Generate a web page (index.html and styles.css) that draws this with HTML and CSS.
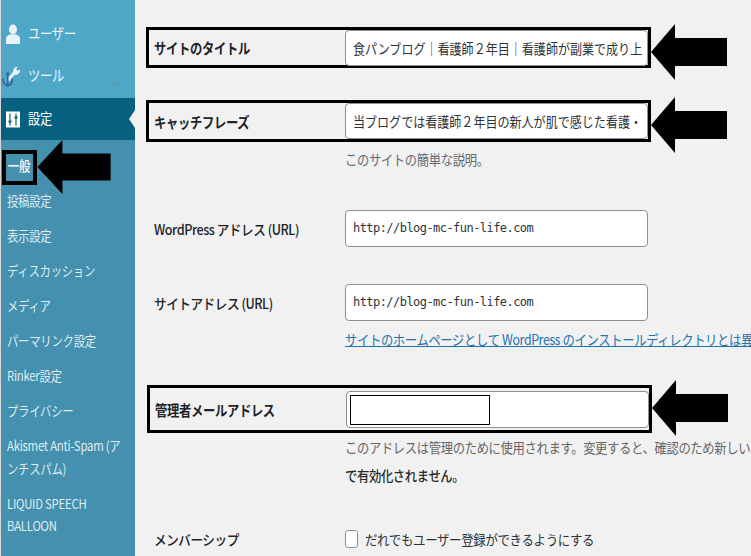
FILE: index.html
```html
<!DOCTYPE html>
<html lang="ja">
<head>
<meta charset="utf-8">
<title>一般設定</title>
<link rel="stylesheet" href="styles.css">
</head>
<body>
<div class="page">
  <nav class="sidebar">
    <div class="top-item">
      <svg class="menu-icon" viewBox="0 0 14 20"><ellipse cx="7" cy="5.500" rx="4" ry="5" fill="#e6f4fa"/><path d="M0 20v-5c0-3 3-4.500 4-4.500h6c1 0 4 1.500 4 4.500v5z" fill="#e6f4fa"/></svg>
      <span class="top-label">ユーザー</span>
    </div>
    <div class="top-item tools">
      <svg class="tool-icon" viewBox="0 0 20 22"><path d="M6 15 13.500 6.500" stroke="#e6f4fa" stroke-width="3.500" fill="none"/><path d="M12 7c-1-3 1-6 4.500-6.500L15 3l1 2 3-1.500c.5 3.500-2.500 6.500-6 5.500z" fill="#e6f4fa"/><path d="M6 8v13M1 13c0 4 2.500 7 5 8 2.500-1 5-4 5-8" fill="none" stroke="#35629c" stroke-width="1.800"/><circle cx="6" cy="8" r="1.600" fill="#35629c"/></svg>
      <span class="top-label">ツール</span>
      <svg class="return-mark" viewBox="0 0 10 8"><path d="M8.500 1v3.500H1.500M3.500 2.500l-2 2 2 2" fill="none" stroke="#6d8f9e" stroke-width="1"/></svg>
    </div>
    <div class="top-item active">
      <svg class="menu-icon" viewBox="0 0 14 16"><path fill="#fff" d="M0 0h14v16H0z"/><path d="M4 2v12M10 2v12" stroke="#0b5f7e" stroke-width="1.200"/><path d="M2.500 9h3v2h-3zM8.500 5h3v2h-3z" fill="#0b5f7e"/></svg>
      <span class="top-label">設定</span>
    </div>
    <ul class="submenu">
      <li class="current">一般</li>
      <li>投稿設定</li>
      <li>表示設定</li>
      <li>ディスカッション</li>
      <li>メディア</li>
      <li>パーマリンク設定</li>
      <li>Rinker設定</li>
      <li>プライバシー</li>
      <li>Akismet Anti-Spam (アンチスパム)</li>
      <li>LIQUID SPEECH BALLOON</li>
    </ul>
    <div class="current-frame"></div>
    <svg class="arrow sub-arrow" viewBox="0 0 76 56"><path d="M0 28 26 0v14h50v28H26v14z"/></svg>
  </nav>
  <main class="content">
    <div class="row framed first">
      <label>サイトのタイトル</label>
      <div class="field"><span class="squeeze">食パンブログ｜看護師２年目｜看護師が副業で成り上</span></div>
      <svg class="arrow row-arrow" viewBox="0 0 76 56"><path d="M0 28 24 0v14h52v28H24v14z"/></svg>
    </div>
    <div class="row framed second">
      <label>キャッチフレーズ</label>
      <div class="field"><span class="squeeze">当ブログでは看護師２年目の新人が肌で感じた看護・</span></div>
      <svg class="arrow row-arrow" viewBox="0 0 76 56"><path d="M0 28 24 0v14h52v28H24v14z"/></svg>
    </div>
    <p class="note tagline">このサイトの簡単な説明。</p>
    <div class="row plain wp">
      <label class="light">WordPress アドレス (URL)</label>
      <div class="field mono">http://blog-mc-fun-life.com</div>
    </div>
    <div class="row plain site">
      <label class="light">サイトアドレス (URL)</label>
      <div class="field mono">http://blog-mc-fun-life.com</div>
    </div>
    <p class="note link-note"><a href="#">サイトのホームページとして WordPress のインストールディレクトリとは異なる場所を設定する</a></p>
    <div class="row framed mail">
      <label>管理者メールアドレス</label>
      <div class="field tall"><span class="redact"></span></div>
      <svg class="arrow row-arrow mail-arrow" viewBox="0 0 76 56"><path d="M0 28 24 0v14h52v28H24v14z"/></svg>
    </div>
    <p class="note mail-note">このアドレスは管理のために使用されます。変更すると、確認のため新しいアドレスにメールを送信します。<br><b>で有効化されません。</b></p>
    <div class="member">
      <label class="light">メンバーシップ</label>
      <span class="checkbox"></span>
      <span class="check-text">だれでもユーザー登録ができるようにする</span>
    </div>
  </main>
</div>
</body>
</html>
```
FILE: styles.css
```css
* { box-sizing: border-box; }
html, body { margin: 0; height: 100%; }
body {
  background: #f1f1f1;
  font-family: "Noto Sans CJK JP", "Noto Sans", sans-serif;
  overflow: hidden;
}
.page {
  display: grid;
  grid-template-columns: 135px 1fr;
  width: 751px;
  height: 556px;
  overflow: hidden;
}
.sidebar {
  position: relative;
  background: #4fa7c8;
  border-left: 1px solid #d8d8d8;
  color: #eaf6fb;
  padding-top: 13px;
  height: 556px;
  overflow: hidden;
}
.top-item {
  display: flex;
  align-items: center;
  gap: 8px;
  height: 42px;
  padding-left: 5px;
  font-size: 15px;
  letter-spacing: -.4px;
  position: relative;
}
.top-item.tools { height: 43px; padding-left: 1px; gap: 7px; }
.top-item.active {
  background: #07607f;
  color: #fff;
}
.top-item.active::after {
  content: "";
  position: absolute;
  right: 0;
  top: 12px;
  border: 9px solid transparent;
  border-right-color: #f1f1f1;
  border-left-width: 0;
  border-right-width: 6px;
}
.top-label {
  display: inline-block;
  transform: scaleX(.82);
  transform-origin: left center;
  margin-bottom: 4px;
}
.menu-icon { width: 14px; height: 20px; flex: none; }
.tool-icon { width: 19px; height: 21px; flex: none; }
.active .menu-icon { width: 14px; height: 17px; }
.return-mark { position: absolute; left: 108px; top: 25px; width: 9px; height: 7px; }
.submenu {
  list-style: none;
  margin: 0;
  padding: 14px 0 0 6px;
  background: #4590ae;
  height: 420px;
  font-size: 13.700px;
  line-height: 22.500px;
  color: #dcedf4;
  letter-spacing: -.3px;
}
.submenu li {
  margin-bottom: 12.500px;
  width: 148px;
  transform: scaleX(.83);
  transform-origin: left center;
}
.submenu .current { color: #fff; font-weight: 500; padding-left: 1px; }
.current-frame {
  position: absolute;
  left: 1px;
  top: 150px;
  width: 35px;
  height: 35px;
  border: 4px solid #000;
}
.arrow { fill: #000; position: absolute; }
.sub-arrow { left: 35px; top: 140px; width: 76px; height: 54px; }
.content { position: relative; padding-top: 27px; padding-left: 11px; }
.row { display: flex; align-items: center; position: relative; }
label {
  display: block;
  font-size: 14.500px;
  font-weight: 700;
  color: #1d2327;
  letter-spacing: -.4px;
  transform: scaleX(.85);
  transform-origin: left center;
}
label.light { font-weight: 500; font-size: 14px; letter-spacing: -.5px; transform: scaleX(.9); }
.framed {
  width: 505px;
  height: 41px;
  border: 3px solid #000;
  padding-left: 5px;
}
.framed label { width: 191px; flex: none; }
.plain label { width: 191px; flex: none; margin-left: 8px; }
.field {
  width: 303px;
  height: 36px;
  background: #fff;
  border: 1px solid #8c8f94;
  border-radius: 4px;
  padding: 0 7px;
  font-size: 14px;
  line-height: 34px;
  color: #2c3338;
  white-space: nowrap;
  overflow: hidden;
  flex: none;
}
.squeeze {
  display: inline-block;
  transform: scaleX(.86);
  transform-origin: left center;
}
.mono {
  font-family: "DejaVu Sans Mono", "Liberation Mono", monospace;
  font-size: 12px;
  letter-spacing: -.55px;
  height: 37px;
}
.tall { height: 37px; position: relative; padding: 3px; }
.redact {
  display: block;
  width: 140px;
  height: 30px;
  border: 1px solid #000;
  background: #fff;
}
.row-arrow { left: 502px; top: -6px; width: 76px; height: 56px; }
.mail-arrow { top: -8px; }
.second { margin-top: 32px; height: 42px; }
.note {
  margin: 0 0 0 199px;
  font-size: 14px;
  color: #646970;
  letter-spacing: -.4px;
  white-space: nowrap;
  line-height: 23px;
  transform: scaleX(.88);
  transform-origin: left center;
}
.tagline { margin-top: 6px; }
.wp { margin-top: 39px; }
.site { margin-top: 37px; }
.link-note { margin-top: 7px; }
.link-note a { color: #2271b1; }
.mail { margin-top: 34px; margin-left: 1px; height: 48px; }
.mail-note { margin-top: 0; line-height: 28px; color: #666; }
.mail-note b { color: #2b2b2b; font-weight: 500; }
.member { display: flex; align-items: center; margin-top: 40px; margin-left: 8px; }
.member label { width: 191px; flex: none; }
.checkbox {
  width: 13px;
  height: 18px;
  background: #fff;
  border: 1px solid #8c8f94;
  border-radius: 3px;
  flex: none;
}
.check-text {
  display: inline-block;
  margin-left: 7px;
  font-size: 14px;
  color: #2c3338;
  letter-spacing: -.4px;
  transform: scaleX(.89);
  transform-origin: left center;
}
```
